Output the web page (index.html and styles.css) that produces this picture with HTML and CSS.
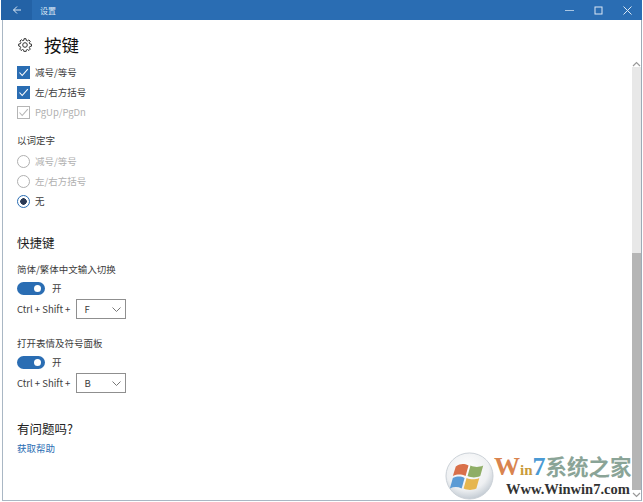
FILE: index.html
```html
<!DOCTYPE html>
<html lang="zh-CN">
<head>
    <meta charset="UTF-8">
    <title>设置</title>
    <link rel="stylesheet" href="styles.css">
</head>
<body>
    <div class="window">
        <div class="titlebar">
            <div class="back-btn">
                <svg width="10" height="10" viewBox="0 0 10 10"><path d="M9 5H1.500M5 1.500L1.500 5L5 8.500" fill="none" stroke="#dbe8f5" stroke-width="1"/></svg>
            </div>
            <span class="title-text">设置</span>
            <div class="win-controls">
                <svg width="9" height="9" viewBox="0 0 9 9"><path d="M0 4.500H9" stroke="#a9c6e3" stroke-width="1"/></svg>
                <svg width="9" height="9" viewBox="0 0 9 9"><rect x="1" y="1" width="7" height="7" fill="none" stroke="#dbe8f5" stroke-width="1"/></svg>
                <svg width="9" height="9" viewBox="0 0 9 9"><path d="M0.500 0.500L8.500 8.500M8.500 0.500L0.500 8.500" stroke="#dbe8f5" stroke-width="1"/></svg>
            </div>
        </div>

        <div class="content">
            <div class="page-head">
                <svg class="gear" width="14" height="14" viewBox="0 0 14 14">
                    <circle cx="7" cy="7" r="2.300" fill="none" stroke="#333" stroke-width="1"/>
                    <path d="M6 .7h2l.3 1.700 1.200.5 1.400-1 1.400 1.400-1 1.400.5 1.200 1.700.3v2l-1.700.3-.5 1.200 1 1.400-1.400 1.400-1.400-1-1.200.5-.3 1.700H6l-.3-1.700-1.200-.5-1.400 1-1.400-1.400 1-1.400-.5-1.200L.7 8V6l1.700-.3.5-1.200-1-1.400 1.400-1.400 1.400 1 1.200-.5z" fill="none" stroke="#333" stroke-width="1"/>
                </svg>
                <h1>按键</h1>
            </div>

            <div class="check-row">
                <span class="check on"><svg width="13" height="13" viewBox="0 0 13 13"><path d="M2.500 6.500L5.200 9.500L10.800 3.200" fill="none" stroke="#fff" stroke-width="1.100"/></svg></span>
                <span>减号/等号</span>
            </div>
            <div class="check-row">
                <span class="check on"><svg width="13" height="13" viewBox="0 0 13 13"><path d="M2.500 6.500L5.200 9.500L10.800 3.200" fill="none" stroke="#fff" stroke-width="1.100"/></svg></span>
                <span>左/右方括号</span>
            </div>
            <div class="check-row disabled">
                <span class="check off"><svg width="11" height="11" viewBox="0 0 11 11"><path d="M1.500 5.500L4.200 8.500L9.800 2.200" fill="none" stroke="#b5b5b5" stroke-width="1.100"/></svg></span>
                <span>PgUp/PgDn</span>
            </div>

            <p class="group-label">以词定字</p>
            <div class="radio-row disabled"><span class="radio"></span><span>减号/等号</span></div>
            <div class="radio-row disabled"><span class="radio"></span><span>左/右方括号</span></div>
            <div class="radio-row"><span class="radio selected"></span><span>无</span></div>

            <h2 class="section-title">快捷键</h2>

            <div class="shortcut">
                <p class="shortcut-name">简体/繁体中文输入切换</p>
                <div class="toggle-row"><span class="toggle"></span><span>开</span></div>
                <div class="key-row">
                    <span>Ctrl + Shift +</span>
                    <div class="key-select">
                        <span>F</span>
                        <svg width="9" height="5" viewBox="0 0 9 5"><path d="M.5 .5L4.500 4.500L8.500 .5" fill="none" stroke="#777" stroke-width="1"/></svg>
                    </div>
                </div>
            </div>

            <div class="shortcut">
                <p class="shortcut-name">打开表情及符号面板</p>
                <div class="toggle-row"><span class="toggle"></span><span>开</span></div>
                <div class="key-row">
                    <span>Ctrl + Shift +</span>
                    <div class="key-select">
                        <span>B</span>
                        <svg width="9" height="5" viewBox="0 0 9 5"><path d="M.5 .5L4.500 4.500L8.500 .5" fill="none" stroke="#777" stroke-width="1"/></svg>
                    </div>
                </div>
            </div>

            <h2 class="help-title">有问题吗?</h2>
            <a class="help-link" href="#">获取帮助</a>
        </div>

        <div class="scrollbar">
            <svg class="arrow" width="9" height="6" viewBox="0 0 9 6"><path d="M1 5L4.500 1.500L8 5" fill="none" stroke="#999" stroke-width="1.200"/></svg>
            <div class="track"></div>
            <div class="thumb"></div>
            <svg class="arrow-down" width="9" height="6" viewBox="0 0 9 6"><path d="M1 1L4.500 4.500L8 1" fill="none" stroke="#999" stroke-width="1.200"/></svg>
        </div>
    </div>

    <div class="watermark">
        <svg class="wm-logo" width="49" height="48" viewBox="0 0 50 50" preserveAspectRatio="none">
            <defs>
                <radialGradient id="orb" cx="45%" cy="35%" r="65%">
                    <stop offset="0" stop-color="#ffffff"/>
                    <stop offset="0.7" stop-color="#eef0f2"/>
                    <stop offset="1" stop-color="#c4ccd4"/>
                </radialGradient>
            </defs>
            <circle cx="25" cy="25" r="24" fill="url(#orb)" stroke="#c9d0d6" stroke-width="1"/>
            <path d="M11 15c5-3 8-3 13-1l-3 11c-5-2-8-2-13 0z" fill="#d9704a"/>
            <path d="M26 14c5 2 8 2 13 0l-3 11c-5 2-8 2-13 0z" fill="#8fae66"/>
            <path d="M8 27c5-2 8-2 12 0l-3 11c-4-2-8-2-12 0z" fill="#5b9bd5"/>
            <path d="M22 27c5 2 8 2 13 0l-3 11c-5 2-8 2-13 0z" fill="#e6b64f"/>
        </svg>
        <div class="wm-text">
            <div class="wm-top"><span class="wm-w">W</span><span class="wm-in">in</span><span class="wm-7">7</span><span class="wm-cn">系统之家</span></div>
            <div class="wm-url">Www.Winwin7.com</div>
        </div>
    </div>
</body>
</html>
```

FILE: styles.css
```css
* {
    box-sizing: border-box;
}

html, body {
    margin: 0;
    height: 100%;
    background: #fff;
    overflow: hidden;
}

body {
    font-family: "Noto Sans CJK SC", "Liberation Sans", sans-serif;
    font-size: 9.5px;
    color: #3c3c3c;
    position: relative;
}

p, h1, h2 {
    margin: 0;
    font-weight: normal;
}

.window {
    width: 640px;
    height: 501px;
    margin-left: 2px;
    border-left: 1px solid #a9b7c4;
    border-right: 1px solid #9daab6;
    border-bottom: 1px solid #a9b7c4;
    position: relative;
}

.titlebar {
    height: 20px;
    margin-left: -2px;
    margin-right: -1px;
    background: #2a6db3;
    display: flex;
    align-items: center;
    color: #dbe8f5;
    font-size: 8px;
}

.back-btn {
    width: 31px;
    height: 20px;
    background: #2362a6;
    display: flex;
    align-items: center;
    justify-content: center;
}

.title-text {
    margin-left: 8px;
}

.win-controls {
    margin-left: auto;
    margin-right: 10px;
    display: flex;
    align-items: center;
    gap: 20px;
}

.content {
    padding: 0 14px;
}

.page-head {
    display: flex;
    align-items: center;
    height: 36px;
    padding-top: 14px;
    margin-bottom: 6px;
}

.gear {
    margin-left: 1px;
}

.page-head h1 {
    font-size: 17.5px;
    line-height: 24px;
    color: #111;
    margin-left: 12px;
}

.check-row, .radio-row {
    display: flex;
    align-items: center;
    gap: 5px;
    height: 20px;
}

.disabled {
    color: #b0b0b0;
}

.check {
    width: 13px;
    height: 13px;
    display: flex;
    align-items: center;
    justify-content: center;
}

.check.on {
    background: #2a6db3;
}

.check.off {
    border: 1px solid #b5b5b5;
}

.group-label {
    margin-top: 8px;
    margin-bottom: 1px;
    height: 20px;
    line-height: 20px;
}

.radio {
    width: 13px;
    height: 13px;
    border: 1.5px solid #b0b0b0;
    border-radius: 50%;
}

.radio.selected {
    border-color: #2a6db3;
    background: radial-gradient(circle, #2b3a55 0 3px, #fff 3.500px);
}

.section-title {
    font-size: 12.5px;
    line-height: 18px;
    color: #222;
    margin-top: 23px;
}

.shortcut {
    margin-top: 8px;
}

.shortcut + .shortcut {
    margin-top: 15px;
}

.shortcut-name {
    height: 18px;
    line-height: 18px;
}

.toggle-row {
    display: flex;
    align-items: center;
    gap: 7px;
    height: 18px;
    margin-top: 1px;
}

.toggle {
    width: 28px;
    height: 13px;
    border-radius: 7px;
    background: #2a6db3;
    position: relative;
}

.toggle::after {
    content: '';
    position: absolute;
    top: 3px;
    right: 4px;
    width: 7px;
    height: 7px;
    border-radius: 50%;
    background: #fff;
}

.key-row {
    display: flex;
    align-items: center;
    gap: 6px;
    margin-top: 2px;
}

.key-select {
    width: 50px;
    height: 20px;
    border: 1.5px solid #8f8f8f;
    display: flex;
    align-items: center;
    justify-content: space-between;
    padding: 0 4px 0 7px;
}

.help-title {
    font-size: 12.5px;
    line-height: 18px;
    color: #222;
    margin-top: 27px;
}

.help-link {
    display: block;
    color: #2a6db3;
    text-decoration: none;
    line-height: 16px;
    margin-top: 2px;
}

.scrollbar {
    position: absolute;
    top: 20px;
    right: 0;
    width: 9px;
    bottom: 0;
    display: flex;
    flex-direction: column;
    align-items: center;
}

.arrow {
    margin-top: 41px;
    flex: none;
}

.track {
    height: 186px;
    width: 9px;
    background: #e8e8e8;
    flex: none;
}

.thumb {
    flex: 1;
    width: 9px;
    background: #b5b5b5;
}

.arrow-down {
    flex: none;
    margin: 2px 0;
}

.watermark {
    position: absolute;
    left: 445px;
    top: 452px;
    display: flex;
    align-items: flex-start;
}

.wm-text {
    white-space: nowrap;
}

.wm-top {
    font-family: "Liberation Serif", serif;
    font-weight: bold;
    font-size: 26px;
    line-height: 27px;
    display: flex;
    align-items: baseline;
}

.wm-w { color: #d9844f; }
.wm-in { color: #c99a3a; font-size: 15px; }
.wm-7 { color: #4a9ad4; }

.wm-cn {
    font-family: "Noto Sans CJK SC", sans-serif;
    font-weight: bold;
    color: #8aa497;
    font-size: 21.5px;
    line-height: 27px;
}

.wm-url {
    font-family: "Liberation Serif", serif;
    font-weight: bold;
    font-size: 14.5px;
    line-height: 15px;
    color: #333;
    margin-left: 12px;
    margin-top: -2px;
}
```
